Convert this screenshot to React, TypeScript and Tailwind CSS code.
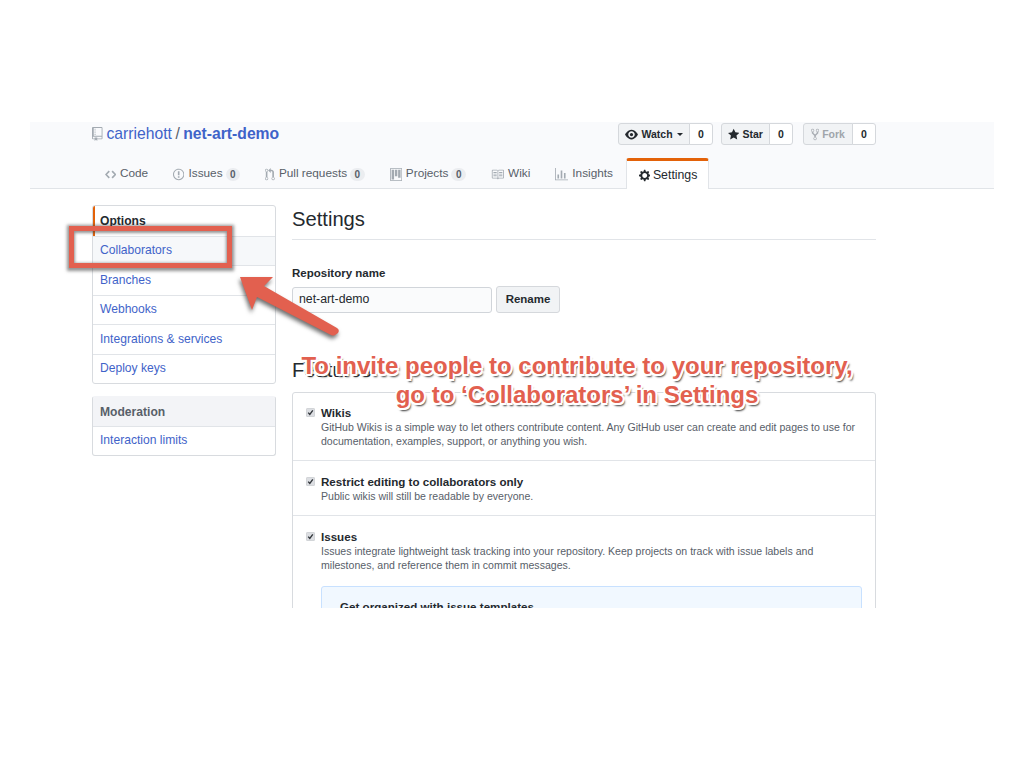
import type { ReactNode } from "react";

const font = { fontFamily: '"Liberation Sans", Arial, sans-serif' };

const icons = {
  repo: { w: 12, d: "M4 9H3V8h1v1zm0-3H3v1h1V6zm0-2H3v1h1V4zm0-2H3v1h1V2zm8-1v12c0 .55-.45 1-1 1H6v2l-1.5-1.5L3 16v-2H1c-.55 0-1-.45-1-1V1c0-.55.45-1 1-1h10c.55 0 1 .45 1 1zm-1 10H1v2h2v-1h3v1h5v-2zm0-10H2v9h9V1z" },
  eye: { w: 16, d: "M8.06 2C3 2 0 8 0 8s3 6 8.06 6C13 14 16 8 16 8s-3-6-7.94-6zM8 12c-2.2 0-4-1.78-4-4 0-2.2 1.8-4 4-4 2.22 0 4 1.8 4 4 0 2.22-1.78 4-4 4zm2-4c0 1.11-.89 2-2 2-1.11 0-2-.89-2-2 0-1.11.89-2 2-2 1.11 0 2 .89 2 2z" },
  star: { w: 14, d: "M14 6l-4.9-.64L7 1 4.9 5.36 0 6l3.6 3.26L2.67 14 7 11.67 11.33 14l-.93-4.74L14 6z" },
  fork: { w: 10, d: "M8 1a1.993 1.993 0 0 0-1 3.72V6L5 8 3 6V4.72A1.993 1.993 0 0 0 2 1a1.993 1.993 0 0 0-1 3.72V6.5l3 3v1.78A1.993 1.993 0 0 0 5 15a1.993 1.993 0 0 0 1-3.72V9.5l3-3V4.72A1.993 1.993 0 0 0 8 1zM2 4.2C1.34 4.2.8 3.65.8 3c0-.65.55-1.2 1.2-1.2.65 0 1.2.55 1.2 1.2 0 .65-.55 1.2-1.2 1.2zm3 10c-.66 0-1.2-.55-1.2-1.2 0-.65.55-1.2 1.2-1.2.65 0 1.2.55 1.2 1.2 0 .65-.55 1.2-1.2 1.2zm3-10c-.66 0-1.2-.55-1.2-1.2 0-.65.55-1.2 1.2-1.2.65 0 1.2.55 1.2 1.2 0 .65-.55 1.2-1.2 1.2z" },
  code: { w: 14, d: "M9.5 3L8 4.5 11.5 8 8 11.5 9.5 13 14 8 9.5 3zm-5 0L0 8l4.5 5L6 11.5 2.5 8 6 4.5 4.5 3z" },
  issue: { w: 14, d: "M7 2.3c3.14 0 5.7 2.56 5.7 5.7s-2.56 5.7-5.7 5.7A5.71 5.71 0 0 1 1.3 8c0-3.14 2.56-5.7 5.7-5.7zM7 1C3.14 1 0 4.14 0 8s3.14 7 7 7 7-3.14 7-7-3.14-7-7-7zm1 3H6v5h2V4zm0 6H6v2h2v-2z" },
  pull: { w: 12, d: "M11 11.28V5c-.03-.78-.34-1.47-.94-2.06C9.46 2.35 8.78 2.03 8 2H7V0L4 3l3 3V4h1c.27.02.48.11.69.31.21.2.3.42.31.69v6.28A1.993 1.993 0 0 0 10 15a1.993 1.993 0 0 0 1-3.72zm-1 2.92c-.66 0-1.2-.55-1.2-1.2 0-.65.55-1.2 1.2-1.2.65 0 1.2.55 1.2 1.2 0 .65-.55 1.2-1.2 1.2zM4 3c0-1.11-.89-2-2-2a1.993 1.993 0 0 0-1 3.72v6.56A1.993 1.993 0 0 0 2 15a1.993 1.993 0 0 0 1-3.72V4.72c.59-.34 1-.98 1-1.72zm-.8 10c0 .66-.55 1.2-1.2 1.2-.65 0-1.2-.55-1.2-1.2 0-.65.55-1.2 1.2-1.2.65 0 1.2.55 1.2 1.2zM2 4.2C1.34 4.2.8 3.65.8 3c0-.65.55-1.2 1.2-1.2.65 0 1.2.55 1.2 1.2 0 .65-.55 1.2-1.2 1.2z" },
  project: { w: 15, d: "M10 12h3V2h-3v10zm-4-2h3V2H6v8zm-4 4h3V2H2v12zm-1 1h13V1H1v14zM14 0H1a1 1 0 0 0-1 1v14a1 1 0 0 0 1 1h13a1 1 0 0 0 1-1V1a1 1 0 0 0-1-1z" },
  book: { w: 16, d: "M3 5h4v1H3V5zm0 3h4V7H3v1zm0 2h4V9H3v1zm11-5h-4v1h4V5zm0 2h-4v1h4V7zm0 2h-4v1h4V9zm2-6v9c0 .55-.45 1-1 1H9.5l-1 1-1-1H2c-.55 0-1-.45-1-1V3c0-.55.45-1 1-1h5.5l1 1 1-1H15c.55 0 1 .45 1 1zm-8 .5L7.5 3H2v9h6V3.5zm7-.5H9.5l-.5.5V12h6V3z" },
  graph: { w: 16, d: "M16 14v1H0V0h1v14h15zM5 13H3V8h2v5zm4 0H7V3h2v10zm4 0h-2V6h2v7z" },
  gear: { w: 14, d: "M14 8.77v-1.6l-1.94-.64-.45-1.09.88-1.84-1.13-1.13-1.81.91-1.09-.45-.69-1.92h-1.6l-.63 1.94-1.11.45-1.84-.88-1.13 1.13.91 1.81-.45 1.09L0 7.23v1.59l1.94.64.45 1.09-.88 1.84 1.13 1.13 1.81-.91 1.09.45.69 1.92h1.59l.63-1.94 1.11-.45 1.84.88 1.13-1.13-.92-1.81.47-1.09L14 8.75v.02zM7 11c-1.66 0-3-1.34-3-3s1.34-3 3-3 3 1.34 3 3-1.34 3-3 3z" },
};

function Octicon({ name, color, size = 14 }: { name: keyof typeof icons; color: string; size?: number }) {
  const icon = icons[name];
  return (
    <svg width={(icon.w / 16) * size} height={size} viewBox={`0 0 ${icon.w} 16`} fill={color} className="shrink-0">
      <path fillRule="evenodd" d={icon.d} />
    </svg>
  );
}

function ActionButton({ icon, label, count, width, caret, muted }: { icon: keyof typeof icons; label: string; count: string; width: string; caret?: boolean; muted?: boolean }) {
  return (
    <div className="flex h-[22px] text-[10.5px] font-bold leading-none">
      <div className={`${width} flex items-center justify-center gap-[3px] rounded-l-[3px] border border-[#d5d8dc] bg-[#f1f3f5] ${muted ? "text-[#a0a5ab]" : "text-[#24292e]"}`}>
        <Octicon name={icon} color={muted ? "#a9adb3" : "#24292e"} size={13} />
        <span>{label}</span>
        {caret && <span className="ml-[1px] h-0 w-0 border-x-[3px] border-t-[3px] border-x-transparent border-t-[#24292e]" />}
      </div>
      <div className="-ml-px flex w-[24px] items-center justify-center rounded-r-[3px] border border-[#d5d8dc] bg-white text-[#24292e]">{count}</div>
    </div>
  );
}

function Tab({ icon, label, count }: { icon: keyof typeof icons; label: string; count?: string }) {
  return (
    <div className="flex h-[30px] items-center px-[12.5px] pt-[2px] text-[11.8px] text-[#586069]">
      <Octicon name={icon} color="#a3aab1" size={13} />
      <span className="ml-[4px]">{label}</span>
      {count && <span className="ml-[3px] rounded-full bg-[#ebedf0] px-[4.5px] text-[10px] leading-[13px] font-bold text-[#586069]">{count}</span>}
    </div>
  );
}

function SideRow({ children, header, first, selected, hover }: { children: ReactNode; header?: boolean; first?: boolean; selected?: boolean; hover?: boolean }) {
  return (
    <div className={`relative flex h-[29.5px] items-center px-[7px] text-[12.1px] ${first ? "pt-[1px]" : "border-t border-[#e1e4e8] pb-[1px]"} ${header ? "bg-[#f3f4f7] font-bold text-[#586069]" : "text-[#3f63c9]"} ${hover ? "bg-[#f6f8fa]" : ""} ${selected ? "font-bold text-[#24292e]" : ""}`}>
      {selected && <span className="absolute top-0 bottom-0 left-0 w-[2px] bg-[#e36209]" />}
      {children}
    </div>
  );
}

function Check() {
  return (
    <svg width="9" height="9" viewBox="0 0 9 9" className="mt-[3px] shrink-0">
      <rect x="0.25" y="0.25" width="8.5" height="8.5" rx="1.5" fill="#dcdee2" stroke="#b5b8bd" strokeWidth="0.5" />
      <path d="M2.2 4.6 L3.8 6.4 L6.8 2.4" fill="none" stroke="#33373c" strokeWidth="1.4" />
    </svg>
  );
}

function Feature({ title, children, height, top, last }: { title: string; children: ReactNode; height: string; top: string; last?: boolean }) {
  return (
    <div className={`${height} ${top} ${last ? "" : "border-b border-[#e1e4e8]"} flex gap-[6px] px-[13px]`}>
      <Check />
      <div className="min-w-0 flex-1">
        <div className="text-[11.6px] leading-[15px] font-bold text-[#24292e]">{title}</div>
        <div className="text-[10.55px] leading-[14px] text-[#586069]">{children}</div>
      </div>
    </div>
  );
}

const overlayText =
  "[text-shadow:-1.5px_-1.5px_0_#fff,1.5px_-1.5px_0_#fff,-1.5px_1.5px_0_#fff,1.5px_1.5px_0_#fff,0_-2px_0_#fff,0_2px_0_#fff,-2px_0_0_#fff,2px_0_0_#fff,2px_3px_2px_#333]";

export default function App() {
  return (
    <div className="relative h-[768px] w-[1024px] overflow-hidden bg-white pt-[122px]" style={font}>
      <div className="mx-[30px] h-[486px] overflow-hidden">
        {/* Repo header */}
        <div className="h-[67px] border-b border-[#e1e4e8] bg-[#f9fafc]">
          <div className="ml-[62px] w-[784px]">
            <div className="flex h-[36px] items-start justify-between">
              <div className="flex h-[23px] items-center text-[15.7px] leading-none text-[#3f63c9]">
                <Octicon name="repo" color="#a3aab1" size={14} />
                <span className="ml-[4px]">carriehott</span>
                <span className="mx-[3.5px] text-[#586069]">/</span>
                <span className="font-bold">net-art-demo</span>
              </div>
              <div className="mt-[1px] flex gap-[8px]">
                <ActionButton icon="eye" label="Watch" count="0" width="w-[72px]" caret />
                <ActionButton icon="star" label="Star" count="0" width="w-[49px]" />
                <div className="ml-[2px]">
                  <ActionButton icon="fork" label="Fork" count="0" width="w-[50px]" muted />
                </div>
              </div>
            </div>
            <div className="flex">
              <Tab icon="code" label="Code" />
              <Tab icon="issue" label="Issues" count="0" />
              <Tab icon="pull" label="Pull requests" count="0" />
              <Tab icon="project" label="Projects" count="0" />
              <Tab icon="book" label="Wiki" />
              <Tab icon="graph" label="Insights" />
              <div className="ml-[1px] flex h-[31px] w-[83px] items-center justify-center gap-[3px] rounded-t-[3px] border-x border-t-[3px] border-x-[#e1e4e8] border-t-[#e36209] bg-white text-[12.3px] text-[#24292e]">
                <Octicon name="gear" color="#24292e" size={13} />
                <span>Settings</span>
              </div>
            </div>
          </div>
        </div>

        {/* Page body */}
        <div className="ml-[62px] flex w-[784px] gap-[16px] pt-[16px]">
          <div className="w-[184px] shrink-0">
            <div className="overflow-hidden rounded-[3px] border border-[#d8dbdf]">
              <SideRow first selected>Options</SideRow>
              <SideRow hover>Collaborators</SideRow>
              <SideRow>Branches</SideRow>
              <SideRow>Webhooks</SideRow>
              <SideRow>Integrations &amp; services</SideRow>
              <SideRow>Deploy keys</SideRow>
            </div>
            <div className="mt-[12px] overflow-hidden rounded-[3px] border border-[#d8dbdf] border-t-[#f3f4f7] [&>div]:h-[29px]">
              <SideRow first header>Moderation</SideRow>
              <SideRow>Interaction limits</SideRow>
            </div>
          </div>

          <div className="w-[584px]">
            <h2 className="h-[35px] border-b border-[#e1e4e8] text-[20.2px] leading-[28px] text-[#24292e]">Settings</h2>
            <div className="mt-[26px] text-[11.5px] leading-[14px] font-bold text-[#24292e]">Repository name</div>
            <div className="mt-[6px] flex items-center gap-[4px]">
              <div className="flex h-[26px] w-[200px] items-center rounded-[3px] border border-[#d1d5da] bg-[#fafbfc] px-[6px] text-[12.3px] text-[#24292e]">net-art-demo</div>
              <div className="flex h-[27px] w-[64px] items-center justify-center rounded-[3px] border border-[#d5d8dc] bg-[#f1f3f5] text-[11.5px] font-bold text-[#24292e]">Rename</div>
            </div>
            <h2 className="mt-[43px] text-[20.2px] leading-[28px] text-[#24292e]">Features</h2>
            <div className="mt-[8px] rounded-[3px] border border-[#d8dbdf]">
              <Feature title="Wikis" height="h-[68px]" top="pt-[12px]">
                GitHub Wikis is a simple way to let others contribute content. Any GitHub user can create and edit pages to use for documentation, examples, support, or anything you wish.
              </Feature>
              <Feature title="Restrict editing to collaborators only" height="h-[55px]" top="pt-[13px]">
                Public wikis will still be readable by everyone.
              </Feature>
              <Feature title="Issues" height="h-[200px]" top="pt-[13px]" last>
                <div className="pr-[20px]">
                  Issues integrate lightweight task tracking into your repository. Keep projects on track with issue labels and milestones, and reference them in commit messages.
                </div>
                <div className="mt-[14px] rounded-[3px] border border-[#c8e1ff] bg-[#f1f8ff] px-[18px] pt-[12px] pb-[16px] text-[11.6px] leading-[16px] font-bold text-[#24292e]">
                  Get organized with issue templates
                </div>
              </Feature>
            </div>
          </div>
        </div>
      </div>

      {/* Callout box around Collaborators */}
      <div className="absolute top-[226px] left-[69px] h-[42px] w-[163px] border-[5px] border-[#e2604f] shadow-[0_1px_3px_2px_rgba(60,60,60,0.55),inset_0_1px_3px_1px_rgba(60,60,60,0.55)]" />

      {/* Arrow */}
      <svg className="absolute top-[270px] left-[235px] drop-shadow-[-1px_3px_2px_rgba(50,50,50,0.7)]" width="110" height="72" viewBox="0 0 110 72">
        <path d="M5 7 L38 7 L29 16 L102 58 Q105 60 103 63 L100 65 Q98 66 96 65 L22 27 L17 40 Z" fill="#e2604f" />
      </svg>

      {/* Callout text */}
      <div className={`absolute top-[351px] left-[290px] w-[574px] text-center text-[24px] leading-[29px] font-bold text-[#e2604f] ${overlayText}`}>
        <div>To invite people to contribute to your repository,</div>
        <div>go to ‘Collaborators’ in Settings</div>
      </div>
    </div>
  );
}
